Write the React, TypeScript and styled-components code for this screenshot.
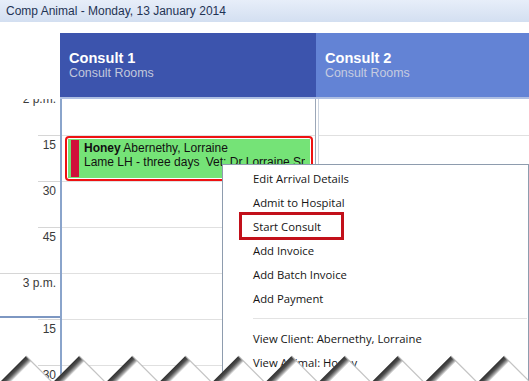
import React from 'react';
import styled, { createGlobalStyle } from 'styled-components';

const Global = createGlobalStyle`
  html, body { margin: 0; padding: 0; background: #fff; }
  body {
    width: 529px; height: 381px; overflow: hidden;
    font-family: "Liberation Sans", Arial, sans-serif;
  }
`;

const Screen = styled.div`
  position: relative;
  width: 529px;
  height: 381px;
  overflow: hidden;
  display: flex;
  flex-direction: column;
  background: #fff;
`;

const TitleBar = styled.div`
  flex: none;
  height: 22px;
  box-sizing: border-box;
  padding-left: 6px;
  display: flex;
  align-items: center;
  background: linear-gradient(#e7eef9, #d3dff1);
  font-size: 12px;
  color: #1f3354;
`;

const Scheduler = styled.div`
  margin-top: 11px;
  flex: 1;
  min-height: 0;
  display: flex;
  flex-direction: column;
`;

const HeaderRow = styled.div`
  flex: none;
  height: 66px;
  display: flex;
`;

const Corner = styled.div`
  flex: none;
  width: 60px;
`;

const ResourceHeader = styled.div<{ $bg: string; $w?: number }>`
  ${(p) => (p.$w ? `width: ${p.$w}px; flex: none;` : 'flex: 1;')}
  box-sizing: border-box;
  background: ${(p) => p.$bg};
  border-bottom: 2px solid #aebfe3;
  padding: 17px 0 0 9px;
`;

const ResourceName = styled.div`
  font-size: 14.6px;
  line-height: 16px;
  font-weight: bold;
  color: #fff;
`;

const ResourceGroup = styled.div<{ $c: string }>`
  font-size: 12.4px;
  line-height: 15px;
  color: ${(p) => p.$c};
`;

const BodyRow = styled.div`
  flex: 1;
  min-height: 0;
  display: flex;
  overflow: hidden;
`;

const Ruler = styled.div`
  flex: none;
  width: 60px;
  border-right: 2px solid #8aa4cb;
  overflow: hidden;
`;

const Track = styled.div`
  margin-top: -10px;
`;

const RulerSlot = styled.div<{ $full?: boolean }>`
  height: 46px;
  box-sizing: border-box;
  display: flex;
  flex-direction: column;
  justify-content: space-between;
  align-items: stretch;
  padding: 3px 0 1px;
  background: linear-gradient(#d6d6d6, #d6d6d6) no-repeat right top;
  background-size: ${(p) => (p.$full ? '100%' : '22px')} 1px;
`;

const RulerLabel = styled.div`
  text-align: right;
  padding-right: 4px;
  font-size: 12px;
  line-height: 14px;
  color: #3a3a3a;
`;

const NowMarker = styled.div`
  height: 2px;
  background: #7d97c2;
`;

const DayColumn = styled.div<{ $w?: number; $first?: boolean }>`
  ${(p) => (p.$w ? `width: ${p.$w}px; flex: none;` : 'flex: 1;')}
  box-sizing: border-box;
  overflow: hidden;
  ${(p) =>
    p.$first
      ? 'border-right: 1px solid #9ba7b8;'
      : 'margin-left: 2px; border-left: 1px solid #ccd4df;'}
`;

const Cell = styled.div`
  height: 46px;
  box-sizing: border-box;
  border-top: 1px solid #e0e0e0;
  padding: 0 2px 0 3px;
  display: flex;
`;

const Appt = styled.div`
  flex: 1;
  min-width: 0;
  box-sizing: border-box;
  border: 2px solid #ee1111;
  border-radius: 4px;
  background: #fff;
  padding: 1px;
  display: flex;
`;

const ApptBody = styled.div`
  flex: 1;
  min-width: 0;
  background: #75e377;
  display: flex;
  padding: 1px 5px 1px 3px;
`;

const StatusBar = styled.div`
  flex: none;
  width: 8px;
  background: #d0103a;
  margin-right: 5px;
`;

const ApptText = styled.div`
  flex: 1;
  min-width: 0;
  overflow: hidden;
  white-space: nowrap;
  padding-top: 1px;
  font-size: 12px;
  line-height: 14px;
  color: #111;
  b { font-weight: bold; }
`;

const Gap = styled.span`
  margin-left: 3px;
`;

const Menu = styled.div`
  position: absolute;
  left: 222px;
  top: 164px;
  width: 307px;
  height: 240px;
  box-sizing: border-box;
  border: 1px solid #8e9cae;
  background: #fff;
  padding: 1px 0;
  font-family: "Open Sans", "Noto Sans", sans-serif;
`;

const MenuItem = styled.div`
  height: 24px;
  display: flex;
  align-items: center;
  padding-left: 30px;
  font-size: 11.3px;
  color: #151515;
  white-space: nowrap;
`;

const MenuSep = styled.div`
  height: 16px;
  display: flex;
  align-items: center;
  padding: 0 1px 0 30px;
  &::after {
    content: '';
    flex: 1;
    height: 1px;
    background: #e3e3e3;
  }
`;

const Callout = styled.div`
  position: absolute;
  left: 239px;
  top: 212px;
  width: 105px;
  height: 28px;
  box-sizing: border-box;
  border: 3px solid #c2101a;
`;

const TornEdge = styled.svg`
  position: absolute;
  left: 0;
  bottom: 0;
  width: 529px;
  height: 30px;
`;

const rulerSlots = [
  { label: '2 p.m.', full: true },
  { label: '15' },
  { label: '30' },
  { label: '45' },
  { label: '3 p.m.', full: true, now: true },
  { label: '15' },
  { label: '30' },
  { label: '45' },
];

const menuTop = [
  'Edit Arrival Details',
  'Admit to Hospital',
  'Start Consult',
  'Add Invoice',
  'Add Batch Invoice',
  'Add Payment',
];
const menuBottom = ['View Client: Abernethy, Lorraine', 'View Animal: Honey', 'View Consult'];

const period = 53.1;
const peaks = Array.from({ length: 12 }, (_, i) => 26 - period + i * period);
const PEAK_Y = 5;
const H = 26.5;

function Torn() {
  const pts = [`-60,40`];
  peaks.forEach((px) => {
    pts.push(`${px - H},${PEAK_Y + H}`);
    pts.push(`${px},${PEAK_Y}`);
    pts.push(`${px + H},${PEAK_Y + H}`);
  });
  pts.push(`600,40`);
  const d = 8 / Math.SQRT2;
  return (
    <TornEdge viewBox="0 0 529 30">
      <defs>
        <linearGradient
          id="tearShade"
          gradientUnits="userSpaceOnUse"
          x1={-H / 2}
          y1={PEAK_Y + H / 2}
          x2={-H / 2 + d}
          y2={PEAK_Y + H / 2 + d}
        >
          <stop offset="0" stopColor="#2e2e2e" />
          <stop offset="0.4" stopColor="#4f4f4f" />
          <stop offset="0.75" stopColor="#a8a8a8" />
          <stop offset="1" stopColor="#ffffff" />
        </linearGradient>
      </defs>
      <polygon points={pts.join(' ')} fill="#fff" />
      {peaks.map((px, i) => (
        <g key={i} transform={`translate(${px},0)`}>
          <polygon
            points={`0,${PEAK_Y} ${-H},${PEAK_Y + H} ${-H + d},${PEAK_Y + H + d} ${d},${PEAK_Y + d}`}
            fill="url(#tearShade)"
          />
          <line x1={0} y1={PEAK_Y} x2={H} y2={PEAK_Y + H} stroke="#b0b0b0" strokeWidth={1.2} opacity={0.75} />
        </g>
      ))}
    </TornEdge>
  );
}

function Column({ first, appt }: { first?: boolean; appt?: boolean }) {
  return (
    <DayColumn $first={first} $w={first ? 254 : undefined}>
      <Track>
        {rulerSlots.map((_, i) => (
          <Cell key={i}>
            {appt && i === 1 && (
              <Appt>
                <ApptBody>
                  <StatusBar />
                  <ApptText>
                    <div>
                      <b>Honey</b> Abernethy, Lorraine
                    </div>
                    <div>
                      Lame LH - three days <Gap>Vet: Dr Lorraine Smith</Gap>
                    </div>
                  </ApptText>
                </ApptBody>
              </Appt>
            )}
          </Cell>
        ))}
      </Track>
    </DayColumn>
  );
}

export default function App() {
  return (
    <>
      <Global />
      <Screen>
        <TitleBar>Comp Animal - Monday, 13 January 2014</TitleBar>
        <Scheduler>
          <HeaderRow>
            <Corner />
            <ResourceHeader $bg="#3c54ad" $w={256}>
              <ResourceName>Consult 1</ResourceName>
              <ResourceGroup $c="#c2c8dc">Consult Rooms</ResourceGroup>
            </ResourceHeader>
            <ResourceHeader $bg="#6383d5">
              <ResourceName>Consult 2</ResourceName>
              <ResourceGroup $c="#c6cce0">Consult Rooms</ResourceGroup>
            </ResourceHeader>
          </HeaderRow>
          <BodyRow>
            <Ruler>
              <Track>
                {rulerSlots.map((s, i) => (
                  <RulerSlot key={i} $full={s.full}>
                    <RulerLabel>{s.label}</RulerLabel>
                    {s.now && <NowMarker />}
                  </RulerSlot>
                ))}
              </Track>
            </Ruler>
            <Column first appt />
            <Column />
          </BodyRow>
        </Scheduler>
        <Menu>
          {menuTop.map((m) => (
            <MenuItem key={m}>{m}</MenuItem>
          ))}
          <MenuSep />
          {menuBottom.map((m) => (
            <MenuItem key={m}>{m}</MenuItem>
          ))}
        </Menu>
        <Callout />
        <Torn />
      </Screen>
    </>
  );
}
